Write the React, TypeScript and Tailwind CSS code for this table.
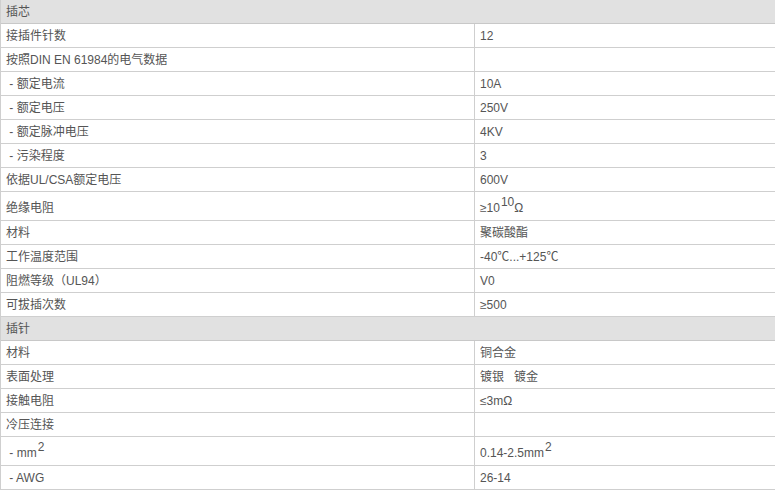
import React, { FC, ReactNode } from "react";

type Row =
  | { kind: "head"; label: string }
  | { kind: "row"; label: ReactNode; value?: ReactNode; tall?: boolean };

const Sup: FC<{ children: ReactNode }> = ({ children }) => (
  <sup className="text-[12px] top-[-6px] ml-[1px]">{children}</sup>
);

const rows: Row[] = [
  { kind: "head", label: "插芯" },
  { kind: "row", label: "接插件针数", value: "12" },
  { kind: "row", label: "按照DIN EN 61984的电气数据", value: "" },
  { kind: "row", label: "\u00a0- 额定电流", value: "10A" },
  { kind: "row", label: "\u00a0- 额定电压", value: "250V" },
  { kind: "row", label: "\u00a0- 额定脉冲电压", value: "4KV" },
  { kind: "row", label: "\u00a0- 污染程度", value: "3" },
  { kind: "row", label: "依据UL/CSA额定电压", value: "600V" },
  {
    kind: "row",
    label: "绝缘电阻",
    value: (
      <>
        ≥10<Sup>10</Sup>Ω
      </>
    ),
    tall: true,
  },
  { kind: "row", label: "材料", value: "聚碳酸酯" },
  { kind: "row", label: "工作温度范围", value: "-40℃...+125℃" },
  { kind: "row", label: "阻燃等级（UL94）", value: "V0" },
  { kind: "row", label: "可拔插次数", value: "≥500" },
  { kind: "head", label: "插针" },
  { kind: "row", label: "材料", value: "铜合金" },
  { kind: "row", label: "表面处理", value: "镀银\u00a0\u00a0\u00a0镀金" },
  { kind: "row", label: "接触电阻", value: "≤3mΩ" },
  { kind: "row", label: "冷压连接", value: "" },
  {
    kind: "row",
    label: (
      <>
        {"\u00a0- mm"}
        <Sup>2</Sup>
      </>
    ),
    value: (
      <>
        0.14-2.5mm<Sup>2</Sup>
      </>
    ),
    tall: true,
  },
  { kind: "row", label: "\u00a0- AWG", value: "26-14" },
];

export default function App() {
  return (
    <div className="w-[775px] h-[494px] overflow-hidden bg-white text-[12px] text-[#555] font-['Liberation_Sans','Noto_Sans_CJK_SC',sans-serif]">
      <div className="w-[800px] border-l border-[#cfcfcf]">
        {rows.map((r, i) =>
          r.kind === "head" ? (
            <div
              key={i}
              className="h-[24px] flex items-center pl-[5px] bg-[#e1e1e1] border-b border-[#c8c8c8]"
            >
              {r.label}
            </div>
          ) : (
            <div
              key={i}
              className={
                r.tall
                  ? "h-[29px] flex border-b border-[#cfcfcf]"
                  : "h-[24px] flex border-b border-[#cfcfcf]"
              }
            >
              <div
                className={
                  r.tall
                    ? "w-[474px] shrink-0 flex items-center pl-[5px] pt-[4px] border-r border-[#cfcfcf]"
                    : "w-[474px] shrink-0 flex items-center pl-[5px] border-r border-[#cfcfcf]"
                }
              >
                <span>{r.label}</span>
              </div>
              <div
                className={
                  r.tall
                    ? "flex-1 flex items-center pl-[5px] pt-[4px]"
                    : "flex-1 flex items-center pl-[5px]"
                }
              >
                <span>{r.value}</span>
              </div>
            </div>
          )
        )}
      </div>
    </div>
  );
}
